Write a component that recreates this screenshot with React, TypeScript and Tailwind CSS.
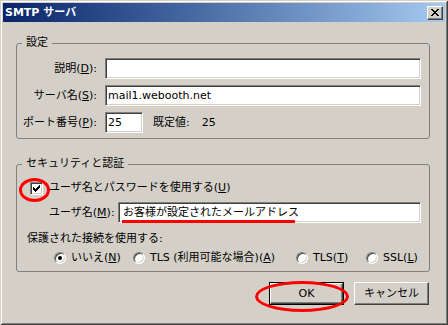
import React from 'react';

const sunken =
    "border border-t-[#808080] border-l-[#808080] border-b-white border-r-white shadow-[inset_1px_1px_0_#404040,inset_-1px_-1px_0_#d4d0c8] bg-white";
const raised =
    "border border-t-white border-l-white border-b-[#404040] border-r-[#404040] shadow-[inset_-1px_-1px_0_#808080,inset_1px_1px_0_#d4d0c8] bg-[#d4d0c8]";

const Key = ({ k }: { k: string }) => (
    <span>
        (<span className="underline underline-offset-[1px]">{k}</span>)
    </span>
);

const Radio = ({ checked, label }: { checked?: boolean; label: React.ReactNode }) => (
    <div className="flex items-center">
        <div className="w-[12px] h-[12px] rounded-full border border-t-[#808080] border-l-[#808080] border-b-white border-r-white shadow-[inset_1px_1px_0_#404040,inset_-1px_-1px_0_#d4d0c8] bg-white flex items-center justify-center">
            {checked && <div className="w-[4px] h-[4px] rounded-full bg-black" />}
        </div>
        <span className="ml-[5px]">{label}</span>
    </div>
);

const App = () => {
    return (
        <div className="relative w-[448px] h-[325px] bg-[#d4d0c8] p-[3px] shadow-[inset_1px_1px_0_#d4d0c8,inset_-1px_-1px_0_#404040,inset_2px_2px_0_#fff,inset_-2px_-2px_0_#808080] font-['DejaVu_Sans','Noto_Sans_CJK_JP',sans-serif] text-[11px] leading-[14px] text-black whitespace-nowrap">
            {/* Title bar */}
            <div className="h-[19px] flex items-center justify-between bg-linear-to-r from-[#0a246a] to-[#a6caf0] pl-[2px] pr-[2px]">
                <span className="text-white font-bold text-[11px]">SMTP サーバ</span>
                <button className={`${raised} w-[16px] h-[14px] flex items-center justify-center`}>
                    <svg width="8" height="7" viewBox="0 0 8 7" shapeRendering="crispEdges">
                        <path d="M0 0h2v1h-2zM6 0h2v1h-2zM1 1h2v1h-2zM5 1h2v1h-2zM2 2h4v1h-4zM3 3h2v1h-2zM2 4h4v1h-4zM1 5h2v1h-2zM5 5h2v1h-2zM0 6h2v1h-2zM6 6h2v1h-2z" fill="#000" />
                    </svg>
                </button>
            </div>

            {/* 設定 */}
            <fieldset className="ml-[13px] mt-[14px] w-[414px] rounded-[3px] border border-[#808080] pt-[8px] pb-[5px]">
                <legend className="ml-[5px] px-[4px] leading-[14px]">設定</legend>
                <div className="flex items-center">
                    <label className="w-[80px] text-right">説明<Key k="D" />:</label>
                    <div className={`${sunken} ml-[8px] w-[316px] h-[21px]`} />
                </div>
                <div className="flex items-center mt-[6px]">
                    <label className="w-[80px] text-right">サーバ名<Key k="S" />:</label>
                    <div className={`${sunken} ml-[8px] w-[316px] h-[21px] flex items-center pl-[2px]`}>
                        mail1.webooth.net
                    </div>
                </div>
                <div className="flex items-center mt-[6px]">
                    <label className="w-[80px] text-right">ポート番号<Key k="P" />:</label>
                    <div className={`${sunken} ml-[8px] w-[38px] h-[21px] flex items-center pl-[2px]`}>25</div>
                    <span className="ml-[10px]">既定値:</span>
                    <span className="ml-[12px]">25</span>
                </div>
            </fieldset>

            {/* セキュリティと認証 */}
            <fieldset className="ml-[13px] mt-[18px] w-[414px] rounded-[3px] border border-[#808080] pt-[10px] pb-[6px]">
                <legend className="ml-[5px] px-[4px] leading-[14px]">セキュリティと認証</legend>
                <div className="flex items-center pl-[13px]">
                    <div className={`${sunken} w-[13px] h-[13px] flex items-center justify-center`}>
                        <svg width="7" height="7" viewBox="0 0 7 7" shapeRendering="crispEdges">
                            <path d="M0 2h1v3h-1zM1 3h1v3h-1zM2 4h1v3h-1zM3 3h1v3h-1zM4 2h1v3h-1zM5 1h1v3h-1zM6 0h1v3h-1z" fill="#000" />
                        </svg>
                    </div>
                    <span className="ml-[6px]">ユーザ名とパスワードを使用する<Key k="U" /></span>
                </div>
                <div className="flex items-center pl-[32px] mt-[7px]">
                    <label className="w-[69px]">ユーザ名<Key k="M" />:</label>
                    <div className={`${sunken} w-[303px] h-[21px] flex items-center pl-[4px]`}>
                        お客様が設定されたメールアドレス
                    </div>
                </div>
                <div className="pl-[10px] mt-[9px]">保護された接続を使用する:</div>
                <div className="flex items-center pl-[37px] mt-[5px]">
                    <div className="w-[79px]">
                        <Radio checked label={<>いいえ<Key k="N" /></>} />
                    </div>
                    <div className="w-[163px]">
                        <Radio label={<>TLS (利用可能な場合)<Key k="A" /></>} />
                    </div>
                    <div className="w-[70px]">
                        <Radio label={<>TLS<Key k="T" /></>} />
                    </div>
                    <Radio label={<>SSL<Key k="L" /></>} />
                </div>
            </fieldset>

            {/* Buttons */}
            <div className="flex justify-end gap-[10px] mt-[10px] pr-[16px]">
                <div className="border border-black w-[75px] h-[23px]">
                    <button className={`${raised} w-full h-full flex items-center justify-center`}>OK</button>
                </div>
                <button className={`${raised} w-[75px] h-[23px] flex items-center justify-center`}>キャンセル</button>
            </div>

            {/* red annotations */}
            <div className="absolute left-[19px] top-[178px] w-[31px] h-[24px] rounded-[50%] border-[3px] border-[#ff0000]" />
            <div className="absolute left-[122px] top-[220px] w-[173px] h-[3px] bg-[#ff0000]" />
            <div className="absolute left-[255px] top-[281px] w-[94px] h-[31px] rounded-[50%] border-[3px] border-[#ff0000]" />
        </div>
    );
};

export default App;
